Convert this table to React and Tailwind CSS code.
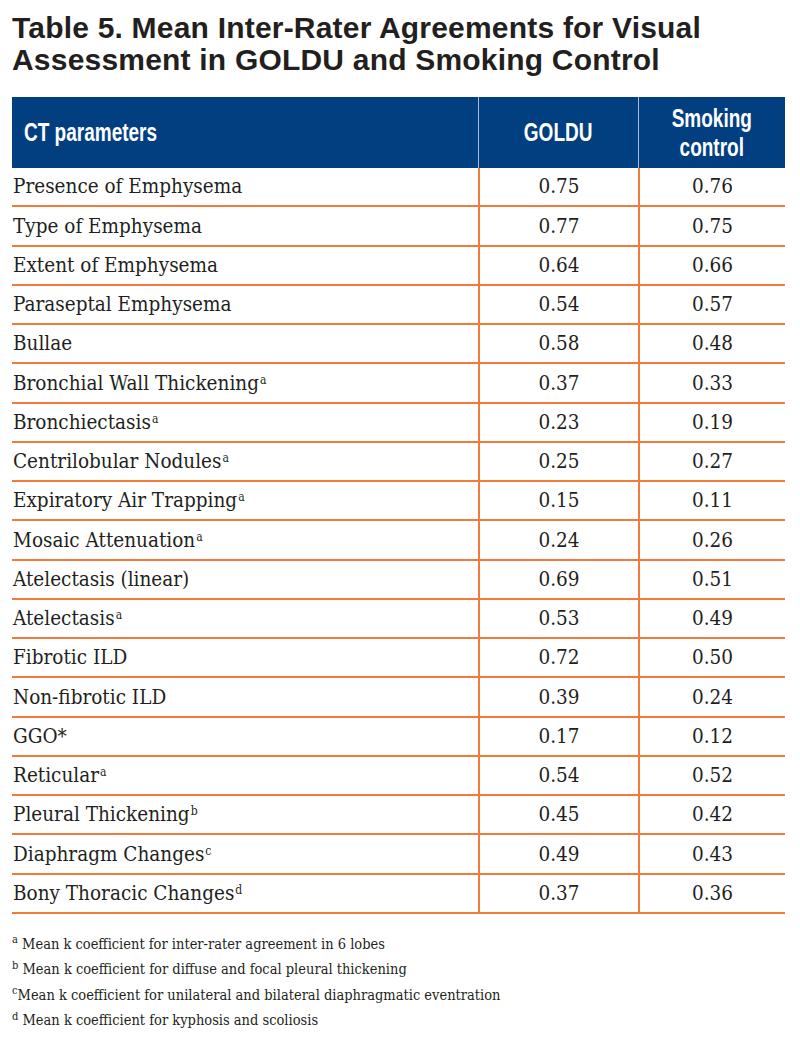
import React from "react";

const rows = [
  ["Presence of Emphysema", "", "0.75", "0.76"],
  ["Type of Emphysema", "", "0.77", "0.75"],
  ["Extent of Emphysema", "", "0.64", "0.66"],
  ["Paraseptal Emphysema", "", "0.54", "0.57"],
  ["Bullae", "", "0.58", "0.48"],
  ["Bronchial Wall Thickening", "a", "0.37", "0.33"],
  ["Bronchiectasis", "a", "0.23", "0.19"],
  ["Centrilobular Nodules", "a", "0.25", "0.27"],
  ["Expiratory Air Trapping", "a", "0.15", "0.11"],
  ["Mosaic Attenuation", "a", "0.24", "0.26"],
  ["Atelectasis (linear)", "", "0.69", "0.51"],
  ["Atelectasis", "a", "0.53", "0.49"],
  ["Fibrotic ILD", "", "0.72", "0.50"],
  ["Non-fibrotic ILD", "", "0.39", "0.24"],
  ["GGO*", "", "0.17", "0.12"],
  ["Reticular", "a", "0.54", "0.52"],
  ["Pleural Thickening", "b", "0.45", "0.42"],
  ["Diaphragm Changes", "c", "0.49", "0.43"],
  ["Bony Thoracic Changes", "d", "0.37", "0.36"],
];

const notes = [
  ["a", " Mean k coefficient for inter-rater agreement in 6 lobes"],
  ["b", " Mean k coefficient for diffuse and focal pleural thickening"],
  ["c", "Mean k coefficient for unilateral and bilateral diaphragmatic eventration"],
  ["d", " Mean k coefficient for kyphosis and scoliosis"],
];

const serif = { fontFamily: '"DejaVu Serif Condensed", "DejaVu Serif", serif' };
const sans = { fontFamily: '"Liberation Sans", Arial, sans-serif' };

export default function App() {
  return (
    <div className="w-[800px] h-[1056px] bg-white text-[#231f20] overflow-hidden">
      <div className="px-[12px] pt-[12px]">
        <h1
          className="text-[30px] leading-[32px] font-bold tracking-[0.2px] text-[#231f20] whitespace-nowrap"
          style={sans}
        >
          Table 5. Mean Inter-Rater Agreements for Visual
          <br />
          Assessment in GOLDU and Smoking Control
        </h1>
      </div>
      <div className="ml-[12px] mt-[21px] w-[773px]">
        <div
          className="grid grid-cols-[466px_160px_147px] h-[71px] bg-[#023f80] text-white font-bold text-[25px] leading-[29px]"
          style={sans}
        >
          <div className="flex items-center pl-[12px]">
            <span className="inline-block whitespace-nowrap scale-x-[0.76] origin-left">CT parameters</span>
          </div>
          <div className="flex items-center justify-center border-l border-[#a9bcd6]">
            <span className="inline-block scale-x-[0.76]">GOLDU</span>
          </div>
          <div className="flex items-center justify-center text-center border-l border-[#a9bcd6]">
            <span className="inline-block scale-x-[0.76]">
              Smoking
              <br />
              control
            </span>
          </div>
        </div>
        {rows.map(([name, sup, a, b]) => (
          <div
            key={name}
            className="grid grid-cols-[466px_160px_147px] h-[39.25px] border-b-2 border-[#f47a3c] text-[20.5px] text-[#231f20]"
            style={serif}
          >
            <div className="flex items-center pl-[1px] whitespace-nowrap">
              <span>
                {name}
                {sup && <sup className="text-[12px] ml-[1px]">{sup}</sup>}
              </span>
            </div>
            <div className="flex items-center justify-center border-l-2 border-[#f47a3c]">{a}</div>
            <div className="flex items-center justify-center border-l-2 border-[#f47a3c]">{b}</div>
          </div>
        ))}
      </div>
      <div className="ml-[12px] mt-[18px] text-[14.5px] leading-[25.5px] text-[#231f20]" style={serif}>
        {notes.map(([s, t]) => (
          <div key={s} className="whitespace-nowrap">
            <sup className="text-[11px]">{s}</sup>
            {t}
          </div>
        ))}
      </div>
    </div>
  );
}
